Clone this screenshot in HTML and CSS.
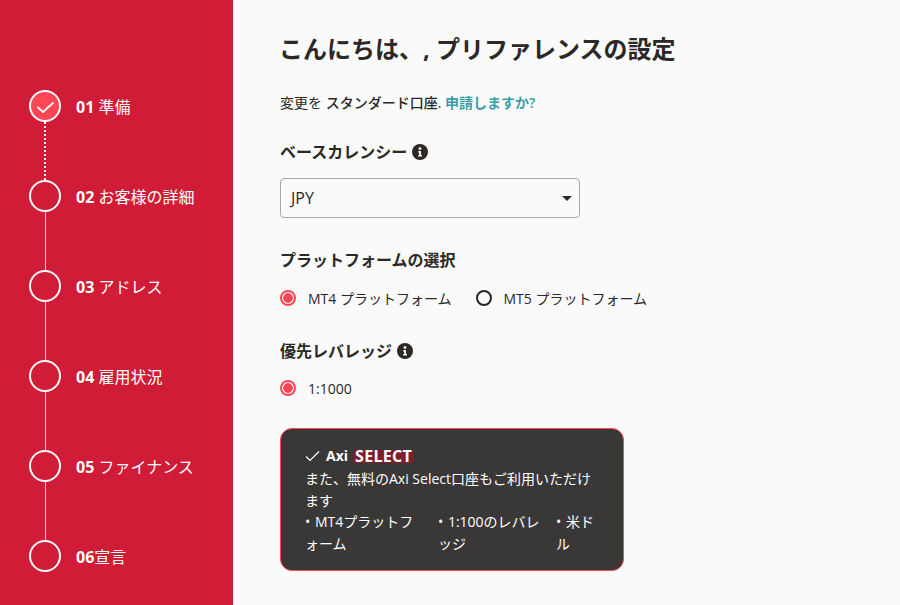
FILE: index.html
```html
<!DOCTYPE html>
<html lang="ja">

<head>
    <meta charset="UTF-8">
    <title>プリファレンスの設定</title>
    <link rel="stylesheet" href="styles.css">
</head>

<body>
    <div class="page">
        <aside class="sidebar">
            <div class="step">
                <div class="marker">
                    <span class="circle done">
                        <svg width="20" height="18" viewBox="0 0 20 18"><path d="M2.5 10 L8 15 L18.5 5.5" fill="none" stroke="#fff" stroke-width="1.8"/></svg>
                    </span>
                    <span class="line dotted"></span>
                </div>
                <div class="step-label"><b>01</b> 準備</div>
            </div>
            <div class="step">
                <div class="marker"><span class="circle"></span><span class="line"></span></div>
                <div class="step-label"><b>02</b> お客様の詳細</div>
            </div>
            <div class="step">
                <div class="marker"><span class="circle"></span><span class="line"></span></div>
                <div class="step-label"><b>03</b> アドレス</div>
            </div>
            <div class="step">
                <div class="marker"><span class="circle"></span><span class="line"></span></div>
                <div class="step-label"><b>04</b> 雇用状況</div>
            </div>
            <div class="step">
                <div class="marker"><span class="circle"></span><span class="line"></span></div>
                <div class="step-label"><b>05</b> ファイナンス</div>
            </div>
            <div class="step">
                <div class="marker"><span class="circle"></span></div>
                <div class="step-label"><b>06</b>宣言</div>
            </div>
        </aside>

        <main class="content">
            <h1>こんにちは、, プリファレンスの設定</h1>
            <p class="account">変更を <span class="account-name">スタンダード口座.</span> <a href="#">申請しますか?</a></p>

            <h2>ベースカレンシー
                <svg class="info" width="16" height="16" viewBox="0 0 16 16"><circle cx="8" cy="8" r="8" fill="#2b2826"/><circle cx="8" cy="4.6" r="1.4" fill="#fff"/><path d="M6.3 7 H9 V11 H10 V12.6 H6.2 V11 H7.2 V8.6 H6.3 Z" fill="#fff"/></svg>
            </h2>
            <div class="select">
                <span>JPY</span>
                <span class="caret"></span>
            </div>

            <h2 class="platform-title">プラットフォームの選択</h2>
            <div class="radios">
                <label class="radio"><span class="dot checked"></span>MT4 プラットフォーム</label>
                <label class="radio"><span class="dot"></span>MT5 プラットフォーム</label>
            </div>

            <h2 class="leverage-title">優先レバレッジ
                <svg class="info" width="16" height="16" viewBox="0 0 16 16"><circle cx="8" cy="8" r="8" fill="#2b2826"/><circle cx="8" cy="4.6" r="1.4" fill="#fff"/><path d="M6.3 7 H9 V11 H10 V12.6 H6.2 V11 H7.2 V8.6 H6.3 Z" fill="#fff"/></svg>
            </h2>
            <div class="radios">
                <label class="radio"><span class="dot checked"></span>1:1000</label>
            </div>

            <div class="select-card">
                <div class="card-head">
                    <svg width="15" height="12" viewBox="0 0 15 12"><path d="M1 6.5 L5 10.5 L14 1.5" fill="none" stroke="#fff" stroke-width="1.2"/></svg>
                    <span class="axi">Axi</span>
                    <span class="select-word">SELECT</span>
                </div>
                <p>また、無料のAxi Select口座もご利用いただけます</p>
                <div class="perks">
                    <span class="perk-1">• MT4プラットフォーム</span>
                    <span class="perk-2">• 1:100のレバレッジ</span>
                    <span class="perk-3">• 米ドル</span>
                </div>
            </div>
        </main>
    </div>
</body>

</html>
```

FILE: styles.css
```css
html,
body {
    margin: 0;
    height: 100%;
}

body {
    font-family: "Open Sans", "Noto Sans CJK JP", sans-serif;
    font-size: 14px;
    color: #2b2826;
    background-color: #fafafa;
    overflow: hidden;
}

.page {
    display: flex;
    height: 605px;
}

/* left column with the steps */
.sidebar {
    width: 233px;
    flex-shrink: 0;
    box-sizing: border-box;
    padding: 90px 0 0 29px;
    background-color: #d01c36;
    color: #fff;
}

.step {
    display: flex;
    height: 90px;
}

.marker {
    display: flex;
    flex-direction: column;
    align-items: center;
    width: 32px;
}

.circle {
    display: flex;
    justify-content: center;
    align-items: center;
    box-sizing: border-box;
    width: 32px;
    height: 32px;
    flex-shrink: 0;
    border: 2px solid #fff;
    border-radius: 50%;
}

.circle.done {
    background-color: #ff4655;
}

.line {
    width: 1px;
    height: 58px;
    background-color: #fff;
    opacity: 0.8;
}

.line.dotted {
    width: 0;
    background: none;
    opacity: 1;
    border-left: 2px dotted #fff;
}

.step-label {
    margin-left: 15px;
    padding-top: 1px;
    font-size: 16px;
    line-height: 32px;
}

.step-label b {
    font-weight: 700;
}

/* form column */
.content {
    flex: 1;
    padding: 0 0 0 47px;
}

h1 {
    margin: 32px 0 0 -1px;
    font-size: 24px;
    line-height: 34px;
    font-weight: 700;
}

.account {
    margin: 27px 0 0;
    line-height: 20px;
}

.account-name {
    font-weight: 500;
}

.account a {
    color: #3a9fa8;
    font-weight: 600;
    text-decoration: none;
}

h2 {
    display: flex;
    align-items: center;
    gap: 5px;
    margin: 27px 0 0;
    font-size: 16px;
    line-height: 24px;
    font-weight: 700;
}

.select {
    display: flex;
    justify-content: space-between;
    align-items: center;
    box-sizing: border-box;
    width: 300px;
    height: 40px;
    margin-top: 14px;
    padding: 0 7px 0 10px;
    border: 1px solid #a8a8a8;
    border-radius: 4px;
    font-size: 16px;
}

.caret {
    width: 0;
    height: 0;
    border-left: 5px solid transparent;
    border-right: 5px solid transparent;
    border-top: 5px solid #2b2826;
}

.platform-title {
    margin-top: 30px;
}

.leverage-title {
    margin-top: 29px;
}

.radios {
    display: flex;
    gap: 24px;
    margin-top: 14px;
}

.leverage-title + .radios {
    margin-top: 13px;
}

.radio {
    display: flex;
    align-items: center;
    gap: 12px;
    height: 24px;
}

.dot {
    box-sizing: border-box;
    width: 16px;
    height: 16px;
    border: 2px solid #2b2826;
    border-radius: 50%;
}

.dot.checked {
    border-color: #ff4655;
    background: radial-gradient(circle, #ff4655 0 4.5px, transparent 5px);
}

.select-card {
    box-sizing: border-box;
    width: 344px;
    height: 143px;
    margin-top: 28px;
    padding: 15px 24px;
    border: 1px solid #ff4655;
    border-radius: 12px;
    background-color: #3a3837;
    color: #fff;
    line-height: 21.7px;
}

.card-head {
    display: flex;
    align-items: center;
    gap: 6px;
    height: 24px;
}

.axi {
    font-weight: 700;
}

.select-word {
    width: 60px;
    box-sizing: border-box;
    padding-left: 1px;
    background-color: #7e1d2b;
    font-size: 16px;
    font-weight: 700;
    line-height: 13px;
    letter-spacing: 0.3px;
    white-space: nowrap;
}

.select-card p {
    margin: 0;
}

.perks {
    display: flex;
    gap: 13px;
    word-spacing: 1px;
}

.perk-1 {
    width: 120px;
}

.perk-2 {
    width: 105px;
}

.perk-3 {
    width: 43px;
}
```
